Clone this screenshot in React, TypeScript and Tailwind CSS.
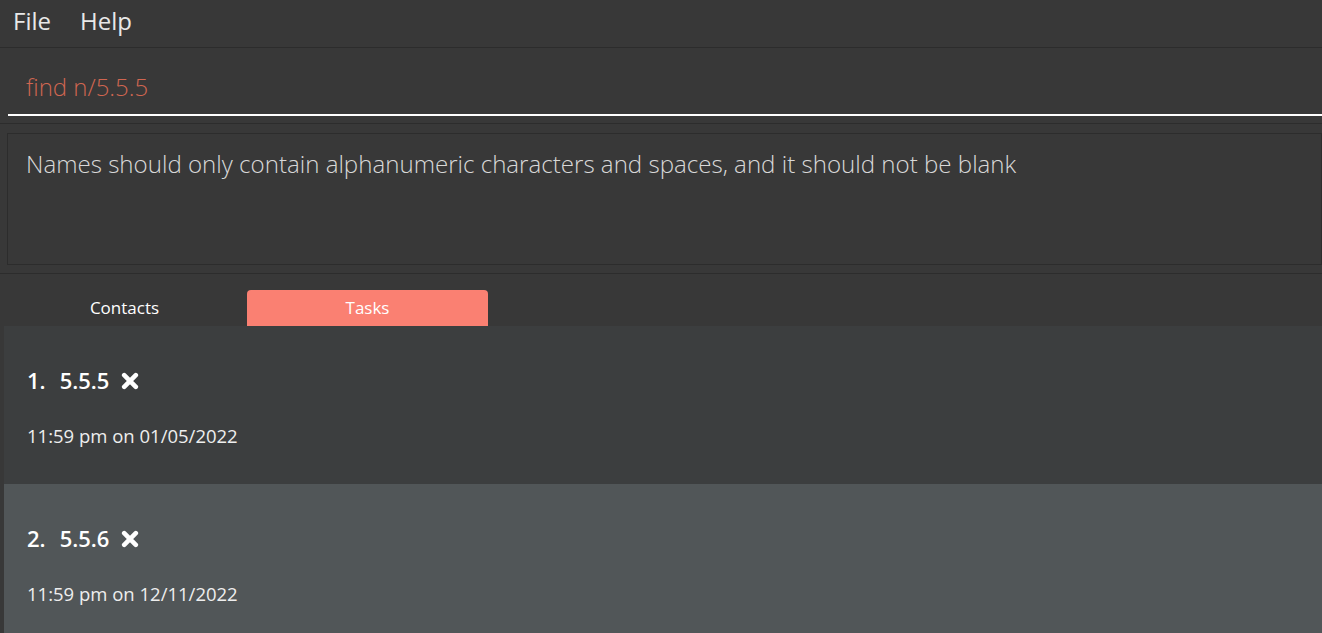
import React from "react";

const font = { fontFamily: '"Open Sans", "Noto Sans", sans-serif' };

function Cross() {
  return (
    <svg width="18" height="18" viewBox="0 0 18 18" className="inline-block">
      <path d="M3.2 3.2 L14.8 14.8 M14.8 3.2 L3.2 14.8" stroke="#ffffff" strokeWidth="4.6" strokeLinecap="round" />
    </svg>
  );
}

function Card({ idx, name, date, bg }: { idx: number; name: string; date: string; bg: string }) {
  return (
    <div className={`h-[158px] shrink-0 ${bg} pl-[23px] pt-[39px] flex flex-col`}>
      <div className="flex items-center h-[30px] text-[22px] font-semibold text-white">
        <span className="mr-[14px]">{idx}.</span>
        <span>{name}</span>
        <span className="ml-[12px] mt-[1px] flex items-center"><Cross /></span>
      </div>
      <div className="mt-[29px] text-[18.5px] text-[#eeeeee] leading-[24px]">{date}</div>
    </div>
  );
}

export default function App() {
  return (
    <div style={font} className="w-[1322px] h-[633px] bg-[#383838] overflow-hidden flex flex-col">
      <div className="h-[47px] flex items-start pt-[3px] pl-[13px] gap-[29px] text-[24px] text-[#e8e8e8] shrink-0">
        <span>File</span>
        <span>Help</span>
      </div>
      <div className="h-[1px] bg-[#2c2c2c] shrink-0" />
      <div className="h-[75px] shrink-0 pl-[8px] pt-[18px]">
        <div className="h-[50px] border-b-2 border-white pl-[18px] pb-[6px] flex items-center text-[24px] font-light text-[#d06651]">
          find n/5.5.5
        </div>
      </div>
      <div className="h-[1px] bg-[#2c2c2c] shrink-0" />
      <div className="h-[149px] shrink-0 pt-[9px] pl-[7px] pb-[8px]">
        <div className="h-full border border-[#2c2c2c] pl-[18px] pt-[12px] text-[24.1px] font-light text-[#d8d8d8]">
          Names should only contain alphanumeric characters and spaces, and it should not be blank
        </div>
      </div>
      <div className="h-[1px] bg-[#2c2c2c] shrink-0" />
      <div className="h-[52px] shrink-0 flex items-end pl-[4px] gap-[2px]">
        <div className="w-[241px] h-[36px] flex items-center justify-center text-[17px] text-white">Contacts</div>
        <div className="w-[241px] h-[36px] rounded-t-[4px] bg-[#fa8072] flex items-center justify-center text-[17px] text-white">Tasks</div>
      </div>
      <div className="flex-1 pl-[4px] flex flex-col">
        <Card idx={1} name="5.5.5" date="11:59 pm on 01/05/2022" bg="bg-[#3c3e3f]" />
        <Card idx={2} name="5.5.6" date="11:59 pm on 12/11/2022" bg="bg-[#515658]" />
      </div>
    </div>
  );
}
